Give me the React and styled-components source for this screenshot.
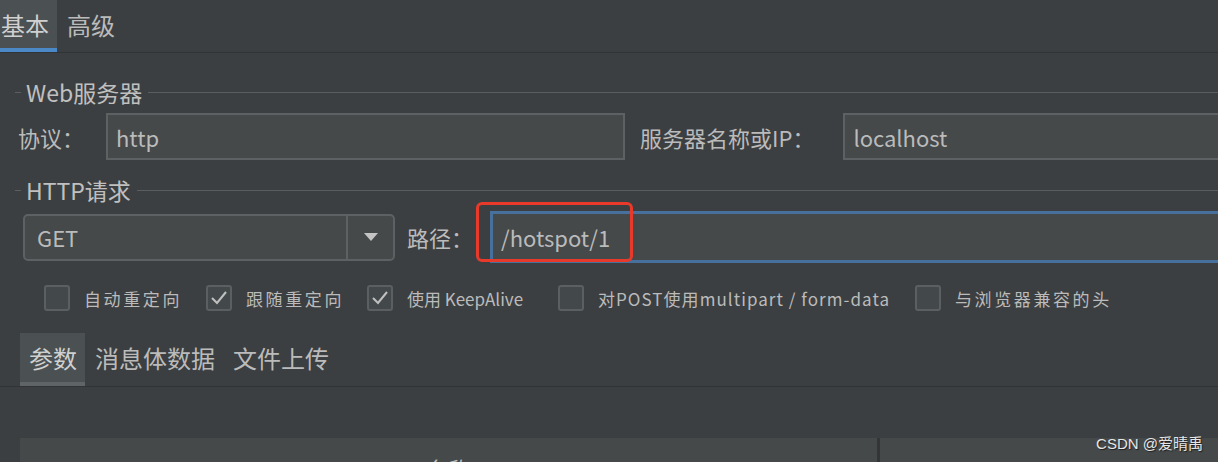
import React from 'react';
import styled, { createGlobalStyle, css } from 'styled-components';

const GlobalStyle = createGlobalStyle`
  body {
    margin: 0;
    background: #3c3f41;
    font-family: "Noto Sans CJK SC", "Noto Sans", sans-serif;
    color: #bbbbbb;
    overflow: hidden;
  }
`;

const Viewport = styled.div`
  position: relative;
  width: 1218px;
  height: 462px;
  overflow: hidden;
  background: #3c3f41;
`;

const Sheet = styled.div`
  width: 1250px;
  display: flex;
  flex-direction: column;
`;

const TabBar = styled.div`
  display: flex;
  align-items: stretch;
  height: ${(props) => props.height}px;
  padding-left: ${(props) => props.inset || 0}px;
  margin-top: ${(props) => props.top || 0}px;
  border-bottom: 1px solid #313335;
  box-sizing: border-box;
`;

const Tab = styled.div`
  display: flex;
  align-items: center;
  padding: ${(props) => props.pad};
  font-size: 24px;
  color: #bbbbbb;
  box-sizing: border-box;
  border-bottom: 4px solid transparent;
  ${(props) =>
    props.active &&
    css`
      background: #4b5052;
      color: #d0d0d0;
      border-bottom-color: ${props.accent};
    `}
`;

const GroupTitle = styled.div`
  display: flex;
  align-items: center;
  height: 26px;
  margin-top: ${(props) => props.top}px;
  padding-left: 15px;
  font-size: 23px;
  color: #c0c0c0;

  &::before {
    content: '';
    width: 6px;
    height: 1px;
    background: #5b5e60;
    margin-right: 5px;
  }

  &::after {
    content: '';
    flex: 1;
    height: 1px;
    background: #5b5e60;
    margin-left: 6px;
  }
`;

const Row = styled.div`
  display: flex;
  align-items: center;
  height: ${(props) => props.height}px;
  margin-top: ${(props) => props.top}px;
  padding-left: ${(props) => props.inset}px;
`;

const Label = styled.span`
  font-size: 22px;
  color: #bbbbbb;
  margin-right: ${(props) => props.gap}px;
  white-space: nowrap;
`;

const TextField = styled.div`
  display: flex;
  align-items: center;
  box-sizing: border-box;
  height: ${(props) => props.height || 47}px;
  ${(props) => (props.width ? `width: ${props.width}px;` : 'flex: 1;')}
  margin-right: ${(props) => props.gap || 0}px;
  padding-left: 8px;
  background: #45494a;
  border: ${(props) => (props.focused ? '3px solid #47709c' : '2px solid #5e6163')};
  font-size: 22px;
  color: #bbbbbb;
`;

const Combo = styled.div`
  display: flex;
  align-items: stretch;
  box-sizing: border-box;
  width: 372px;
  height: 47px;
  margin-right: 12px;
  background: #45494a;
  border: 2px solid #5e6163;
  border-radius: 5px;
`;

const ComboValue = styled.div`
  flex: 1;
  display: flex;
  align-items: center;
  padding-left: 12px;
  font-size: 22px;
  color: #bbbbbb;
  border-right: 2px solid #5e6163;
`;

const ComboArrow = styled.div`
  width: 45px;
  display: flex;
  align-items: center;
  justify-content: center;
`;

const PathWrap = styled.div`
  position: relative;
  flex: 1;
  display: flex;
  margin-left: 17px;
`;

const Highlight = styled.div`
  position: absolute;
  left: -14px;
  top: -9px;
  width: 157px;
  height: 60px;
  box-sizing: border-box;
  border: 3px solid #e8392b;
  border-radius: 6px;
  pointer-events: none;
`;

const CheckRow = styled.div`
  display: flex;
  align-items: center;
  height: 26px;
  margin-top: 22px;
  padding-left: 44px;
`;

const CheckItem = styled.div`
  display: flex;
  align-items: center;
  width: ${(props) => props.width}px;
  flex-shrink: 0;
`;

const Box = styled.div`
  width: 26px;
  height: 26px;
  box-sizing: border-box;
  border: 2px solid #5b5f61;
  border-radius: 3px;
  background: #43494a;
  display: flex;
  align-items: center;
  justify-content: center;
  margin-right: 14px;
`;

const CheckText = styled.span`
  font-size: 17px;
  letter-spacing: ${(props) => props.spacing}px;
  color: #bbbbbb;
  white-space: nowrap;
`;

const TableHead = styled.div`
  display: flex;
  height: 48px;
  margin-top: 51px;
  margin-left: 20px;
  background: #45494a;
`;

const HeadCell = styled.div`
  width: ${(props) => props.width}px;
  display: flex;
  justify-content: center;
  padding-top: 14px;
  font-size: 22px;
  color: #bbbbbb;
  border-right: ${(props) => (props.divider ? '3px solid #333537' : 'none')};
`;

const Watermark = styled.div`
  position: absolute;
  right: 15px;
  bottom: 9px;
  font-family: "Liberation Sans", "Noto Sans CJK SC", sans-serif;
  font-size: 15px;
  color: #e6e6e6;
  text-shadow: 1px 1px 1px rgba(0, 0, 0, 0.6);
`;

const Check = () => (
  <svg width="18" height="16" viewBox="0 0 18 16">
    <polyline points="2,8 7,13 16,2" fill="none" stroke="#c0c0c0" strokeWidth="2" />
  </svg>
);

const checks = [
  { text: '自动重定向', checked: false, width: 162, spacing: 2.6 },
  { text: '跟随重定向', checked: true, width: 161, spacing: 2.6 },
  { text: '使用 KeepAlive', checked: true, width: 191, spacing: 0 },
  { text: '对POST使用multipart / form-data', checked: false, width: 357, spacing: 1.05 },
  { text: '与浏览器兼容的头', checked: false, width: 220, spacing: 2.6 },
];

const App = () => (
  <>
    <GlobalStyle />
    <Viewport>
      <Sheet>
        <TabBar height={53}>
          <Tab active pad="0 8px 0 1px" accent="#4a88c7">基本</Tab>
          <Tab pad="0 10px">高级</Tab>
        </TabBar>

        <GroupTitle top={26}>Web服务器</GroupTitle>
        <Row height={47} top={8} inset={18}>
          <Label gap={22}>协议：</Label>
          <TextField width={519} gap={15}>http</TextField>
          <Label gap={29}>服务器名称或IP：</Label>
          <TextField>localhost</TextField>
        </Row>

        <GroupTitle top={17}>HTTP请求</GroupTitle>
        <Row height={52} top={8} inset={23}>
          <Combo>
            <ComboValue>GET</ComboValue>
            <ComboArrow>
              <svg width="14" height="8" viewBox="0 0 14 8">
                <polygon points="0,0 14,0 7,8" fill="#c4c4c4" />
              </svg>
            </ComboArrow>
          </Combo>
          <Label gap={0}>路径：</Label>
          <PathWrap>
            <TextField focused height={52}>/hotspot/1</TextField>
            <Highlight />
          </PathWrap>
        </Row>

        <CheckRow>
          {checks.map((item) => (
            <CheckItem key={item.text} width={item.width}>
              <Box>{item.checked && <Check />}</Box>
              <CheckText spacing={item.spacing}>{item.text}</CheckText>
            </CheckItem>
          ))}
        </CheckRow>

        <TabBar height={54} inset={20} top={22}>
          <Tab active pad="0 8px 0 9px" accent="#5f6466">参数</Tab>
          <Tab pad="0 8px 0 10px">消息体数据</Tab>
          <Tab pad="0 8px 0 10px">文件上传</Tab>
        </TabBar>

        <TableHead>
          <HeadCell width={858} divider>名称</HeadCell>
          <HeadCell width={370} />
        </TableHead>
      </Sheet>
      <Watermark>CSDN @爱晴禹</Watermark>
    </Viewport>
  </>
);

export default App;
